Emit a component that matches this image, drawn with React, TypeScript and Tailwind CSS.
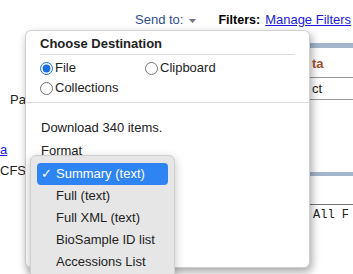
import React from "react";

/* ── Format menu items ───────────────────────────────────────────────── */
const formats = [
  "Summary (text)",
  "Full (text)",
  "Full XML (text)",
  "BioSample ID list",
  "Accessions List",
];

function Radio({ checked, label }: { checked?: boolean; label: string }) {
  return (
    <label className="flex items-center h-[20px]">
      <input
        type="radio"
        name="dest"
        defaultChecked={checked}
        className="m-0 w-[13px] h-[13px] accent-[#1a6fe0]"
      />
      <span className="ml-[2px]">{label}</span>
    </label>
  );
}

export default function App() {
  return (
    <div className="relative w-[353px] h-[274px] overflow-hidden bg-white text-[13px] leading-[16px] text-[#222] font-['Liberation_Sans',Arial,sans-serif]">
      {/* Top bar */}
      <div className="flex items-center h-[38px] pl-[135px] pt-[1px] whitespace-nowrap">
        <span className="shrink-0 text-[#2f4f8c]">Send to:</span>
        <svg width="7" height="4" viewBox="0 0 7 4" className="shrink-0 ml-[6px] mt-[2px]">
          <path d="M0 0h7L3.5 4z" fill="#6b7280" />
        </svg>
        <span className="shrink-0 ml-[22px] text-[12.5px] font-bold text-black">Filters:</span>
        <a className="shrink-0 ml-[5px] text-[#1a1ad6] underline">Manage Filters</a>
      </div>

      {/* Background page */}
      <div className="flex">
        <div className="w-[26px] flex flex-col">
          <span className="pl-[10px] mt-[54px]">Pa</span>
          <a className="mt-[34px] text-[#1a1ad6] underline">a</a>
          <span className="mt-[5px]">CFS</span>
        </div>
        <div className="flex-1" />
        <div className="w-[43px] flex flex-col">
          <div className="mt-[5px] h-[5px] bg-[#a3b6cb]" />
          <span className="mt-[8px] pl-[2px] font-bold text-[#a0522d]">ta</span>
          <div className="mt-[5px] h-px bg-[#999]" />
          <span className="mt-[3px] pl-[2px]">ct</span>
          <div className="mt-[2px] h-px bg-[#999]" />
          <div className="mt-[72px] h-[4px] bg-[#a3b6cb]" />
          <div className="mt-[28px] h-px bg-[#777]" />
          <span className="mt-[2px] pl-[3px] font-['Liberation_Mono',monospace] text-[12px]">All F</span>
        </div>
      </div>

      {/* Choose Destination popup */}
      <div className="absolute left-[25px] top-[30px] w-[285px] h-[238px] rounded-[6px] bg-white border border-[#d0d0d0] shadow-[2px_4px_8px_rgba(0,0,0,0.35)]">
        <div className="px-[14px]">
          <div className="pt-[5px] pb-[2px] border-b border-[#dcdcdc] font-bold text-[#222]">
            Choose Destination
          </div>
          <div className="mt-[3px] flex">
            <div className="w-[105px]">
              <Radio checked label="File" />
            </div>
            <Radio label="Clipboard" />
          </div>
          <Radio label="Collections" />
        </div>
        <div className="mt-[4px] border-t border-[#dcdcdc]" />
        <div className="px-[15px]">
          <div className="mt-[17px]">Download 340 items.</div>
          <div className="mt-[7px]">Format</div>
        </div>
      </div>

      {/* Format dropdown */}
      <div className="absolute left-[30px] top-[155px] w-[145px] pt-[7px] pb-[14px] rounded-[6px] bg-[#e6e6e6] border border-[#cfcfcf] shadow-[0_3px_10px_rgba(0,0,0,0.25)]">
        {formats.map((f, i) => (
          <div
            key={f}
            className={
              i === 0
                ? "mx-[6px] h-[22px] flex items-center rounded-[4px] bg-[#2f84f4] text-white"
                : "mx-[6px] h-[22px] flex items-center text-[#222]"
            }
          >
            <span className="w-[19px] pl-[4px]">{i === 0 ? "✓" : ""}</span>
            {f}
          </div>
        ))}
      </div>
    </div>
  );
}
